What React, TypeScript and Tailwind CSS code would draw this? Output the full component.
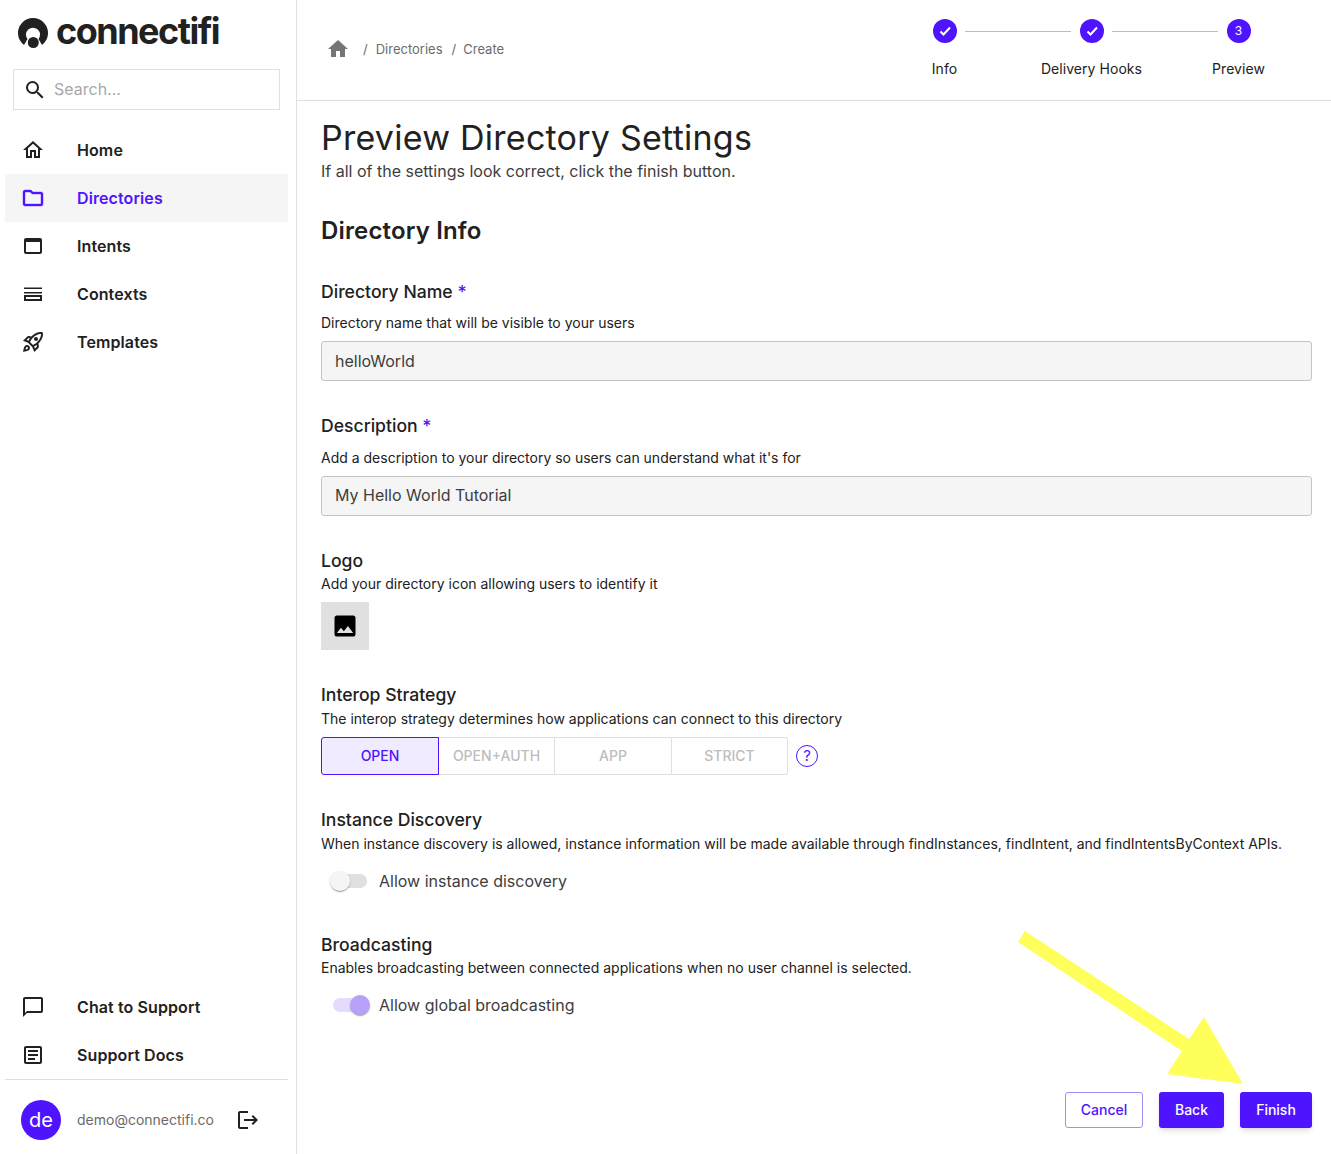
import React from 'react';
import {
  MdOutlineHome,
  MdOutlineWebAsset,
  MdOutlineRocketLaunch,
  MdOutlineChatBubbleOutline,
  MdOutlineArticle,
  MdLogout,
  MdSearch,
  MdHome,
  MdImage,
} from 'react-icons/md';

const ContextsIcon = () => (
  <svg width="24" height="24" viewBox="0 0 24 24" fill="currentColor">
    <path d="M3 5.4h18v1.7H3zM3 9.9h18v1.7H3zM3 13h18v6H3zm2 2v2h14v-2z" fillRule="evenodd" />
  </svg>
);

const FolderIcon = () => (
  <svg width="24" height="24" viewBox="0 0 24 24" fill="currentColor" stroke="currentColor" strokeWidth="0.4">
    <path d="M9.17 6l2 2H20v10H4V6h5.17M10 4H4c-1.1 0-1.99.9-1.99 2L2 18c0 1.1.9 2 2 2h16c1.1 0 2-.9 2-2V8c0-1.1-.9-2-2-2h-8l-2-2z" />
  </svg>
);

const CheckIcon = () => (
  <svg width="24" height="24" viewBox="0 0 24 24" fill="none" stroke="currentColor" strokeWidth="2">
    <path d="M7.5 12.5l3 3 6.5-7" />
  </svg>
);

const Logo = () => (
  <svg width="32" height="32" viewBox="0 0 32 32" fill="#212121">
    <path d="M7 28A15 15 0 1 1 25 28L21.5 22A7 7 0 1 0 10.5 22Z" />
    <circle cx="16.3" cy="25.5" r="5.5" />
  </svg>
);

const nav = [
  { label: 'Home', icon: <MdOutlineHome size={24} /> },
  { label: 'Directories', icon: <FolderIcon />, active: true },
  { label: 'Intents', icon: <MdOutlineWebAsset size={24} /> },
  { label: 'Contexts', icon: <ContextsIcon /> },
  { label: 'Templates', icon: <MdOutlineRocketLaunch size={24} /> },
];

const NavItem = ({ label, icon, active }: { label: string; icon: React.ReactNode; active?: boolean }) => (
  <div className={`flex h-12 items-center pl-4 ${active ? 'bg-[#f5f5f5] text-[#4f14ff]' : 'text-[#212121]'}`}>
    <span className="flex w-14 shrink-0">{icon}</span>
    <span className="text-base font-semibold tracking-[0.1px]">{label}</span>
  </div>
);

const Sidebar = () => (
  <aside className="flex h-[1154px] w-[297px] shrink-0 flex-col border-r border-[#e0e0e0] pr-2">
    <div className="flex h-[69px] items-center pl-[17px] pb-[4px]">
      <Logo />
      <span className="mb-[4px] ml-[7px] text-[36px] leading-none font-bold tracking-[-1.5px] text-[#212121]">connectifi</span>
    </div>
    <div className="ml-[13px] mr-[8px] flex h-[41px] items-center border border-[#e0e0e0] pl-[9px] text-[#212121]">
      <MdSearch size={24} />
      <span className="mb-[2px] ml-[7px] text-base text-[#a8a8a8]">Search...</span>
    </div>
    <nav className="mt-4 ml-[5px]">
      {nav.map((item) => (
        <NavItem key={item.label} {...item} />
      ))}
    </nav>
    <div className="mt-auto ml-[5px]">
      <NavItem label="Chat to Support" icon={<MdOutlineChatBubbleOutline size={24} />} />
      <NavItem label="Support Docs" icon={<MdOutlineArticle size={24} />} />
      <div className="h-[75px] border-t border-[#e0e0e0] pt-[20px] pl-4">
        <div className="flex h-10 items-center">
          <div className="flex h-10 w-10 items-center justify-center rounded-full bg-[#4f14ff] text-xl text-white">de</div>
          <span className="ml-4 text-sm text-[#6b6b6b]">demo@connectifi.co</span>
          <MdLogout size={24} className="ml-[22px] text-[#212121]" />
        </div>
      </div>
    </div>
  </aside>
);

const Step = ({ label, n }: { label: string; n?: number }) => (
  <div className="flex w-[147px] flex-col items-center">
    <div className="flex h-6 w-6 items-center justify-center rounded-full bg-[#4f14ff] text-xs text-white">
      {n ? n : <CheckIcon />}
    </div>
    <span className="mt-[16px] text-sm leading-5 tracking-[0.05px] text-[#212121]">{label}</span>
  </div>
);

const Header = () => (
  <header className="relative flex h-[101px] items-start justify-between border-b border-[#e0e0e0] pl-[29px] pr-[19px]">
    <div className="mt-[37px] flex items-center text-[13px] text-[#6b6b6b]">
      <MdHome size={24} className="text-[#757575]" />
      <div className="flex pt-[2px]">
        <span className="ml-[13px]">/</span>
        <span className="ml-[8px]">Directories</span>
        <span className="ml-[9px]">/</span>
        <span className="ml-[7px]">Create</span>
      </div>
    </div>
    <div className="relative mt-[19px] flex">
      <Step label="Info" />
      <Step label="Delivery Hooks" />
      <Step label="Preview" n={3} />
      <div className="absolute top-3 left-[94px] h-px w-[106px] bg-[#bdbdbd]" />
      <div className="absolute top-3 left-[241px] h-px w-[106px] bg-[#bdbdbd]" />
    </div>
  </header>
);

const Field = ({ value, className = '' }: { value: string; className?: string }) => (
  <div className={`flex h-10 items-center rounded-[3px] border border-[#c4c4c4] bg-[#f5f5f5] px-[13px] text-base text-[#3d3d3d] ${className}`}>
    {value}
  </div>
);

const Required = () => <span className="text-[#4f14ff]"> *</span>;

const Toggle = ({ on, label }: { on?: boolean; label: string }) => (
  <div className="flex h-6 items-center pl-[12px]">
    <div className="relative h-[14px] w-[34px]">
      <div className={`h-full w-full rounded-full ${on ? 'bg-[#e5dcfd]' : 'bg-[#e0e0e0]'}`} />
      <div
        className={`absolute top-[-3px] h-5 w-5 rounded-full shadow-[0_2px_1px_-1px_rgba(0,0,0,0.2),0_1px_1px_rgba(0,0,0,0.14),0_1px_3px_rgba(0,0,0,0.12)] ${
          on ? 'left-[17px] bg-[#b8a1f8]' : 'left-[-3px] bg-[#f5f5f5]'
        }`}
      />
    </div>
    <span className="ml-[12px] text-base text-[#3d3d3d]">{label}</span>
  </div>
);

const Heading = ({ children, className = '' }: { children: React.ReactNode; className?: string }) => (
  <div className={`text-[17.6px] leading-6 font-medium text-[#212121] ${className}`}>{children}</div>
);

const Help = ({ children, className = '' }: { children: React.ReactNode; className?: string }) => (
  <div className={`text-sm leading-5 text-[#212121] ${className}`}>{children}</div>
);

const Strategy = () => (
  <div className="flex items-center">
    <div className="flex h-[38px] w-[467px] rounded-[3px] text-sm text-[#bdbdbd]">
      <div className="flex w-[118px] items-center justify-center rounded-l-[3px] border border-[#4f14ff] bg-[#f0ebfe] font-medium text-[#4f14ff]">OPEN</div>
      <div className="flex w-[116px] items-center justify-center border-y border-r border-[#e0e0e0] font-medium">OPEN+AUTH</div>
      <div className="flex w-[117px] items-center justify-center border-y border-r border-[#e0e0e0] font-medium">APP</div>
      <div className="flex w-[116px] items-center justify-center rounded-r-[3px] border-y border-r border-[#e0e0e0] font-medium">STRICT</div>
    </div>
    <div className="ml-[8px] flex h-[22px] w-[22px] items-center justify-center rounded-full border border-[#4f14ff] text-[15px] text-[#4f14ff]">?</div>
  </div>
);

const Content = () => (
  <main className="px-[24px] pr-[19px]">
    <h1 className="mt-[15px] text-[34px] leading-[44px] tracking-[0.25px] text-[#212121]">Preview Directory Settings</h1>
    <p className="mt-[-1px] text-base leading-6 text-[#3d3d3d]">If all of the settings look correct, click the finish button.</p>
    <h2 className="mt-[32px] text-2xl leading-8 font-semibold tracking-[0.15px] text-[#212121]">Directory Info</h2>

    <Heading className="mt-[33px]">Directory Name <Required /></Heading>
    <Help className="mt-[9px] mb-[8px]">Directory name that will be visible to your users</Help>
    <Field value="helloWorld" />

    <Heading className="mt-[33px]">Description <Required /></Heading>
    <Help className="mt-[10px] mb-[8px]">Add a description to your directory so users can understand what it's for</Help>
    <Field value="My Hello World Tutorial" className="pb-[2px]" />

    <Heading className="mt-[33px]">Logo</Heading>
    <Help className="mt-[1px]">Add your directory icon allowing users to identify it</Help>
    <div className="mt-[8px] flex h-12 w-12 items-center justify-center bg-[#e0e0e0]">
      <MdImage size={28} className="text-black" />
    </div>

    <Heading className="mt-[33px]">Interop Strategy</Heading>
    <Help className="mt-[2px] mb-[8px]">The interop strategy determines how applications can connect to this directory</Help>
    <Strategy />

    <Heading className="mt-[33px]">Instance Discovery</Heading>
    <Help className="mt-[2px] mb-[15px]">When instance discovery is allowed, instance information will be made available through findInstances, findIntent, and findIntentsByContext APIs.</Help>
    <Toggle label="Allow instance discovery" />

    <Heading className="mt-[40px]">Broadcasting</Heading>
    <Help className="mt-[1px] mb-[15px]">Enables broadcasting between connected applications when no user channel is selected.</Help>
    <Toggle on label="Allow global broadcasting" />

    <div className="mt-[75px] flex justify-end gap-4 text-sm font-medium">
      <button className="h-9 w-[78px] rounded-[3px] border border-[#a78bfa] text-[#4f14ff]">Cancel</button>
      <button className="h-9 w-[65px] rounded-[3px] bg-[#4f14ff] text-white shadow-md">Back</button>
      <button className="h-9 w-[72px] rounded-[3px] bg-[#4f14ff] text-white shadow-md">Finish</button>
    </div>
  </main>
);

export default function App() {
  return (
    <div className="relative flex h-[1154px] w-[1331px] overflow-hidden bg-white font-['Inter',sans-serif]">
      <Sidebar />
      <div className="min-w-0 flex-1">
        <Header />
        <Content />
      </div>
      {/* annotation arrow drawn over the screenshot */}
      <svg className="pointer-events-none absolute top-0 left-0" width="1331" height="1154">
        <polygon
          points="1025,931 1018,942 1182,1051 1167,1074 1243,1084 1204,1017 1189,1039"
          fill="#ffff5c"
        />
      </svg>
    </div>
  );
}
